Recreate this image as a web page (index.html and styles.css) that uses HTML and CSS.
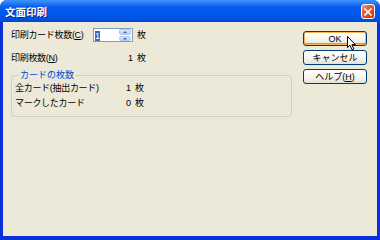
FILE: index.html
```html
<!DOCTYPE html>
<html lang="ja">
<head>
  <meta charset="UTF-8">
  <link rel="stylesheet" href="styles.css">
  <title>文面印刷</title>
</head>
<body>

<div class="window">
  <div class="titlebar">
    <span class="title">文面印刷</span>
    <span class="close-btn">
      <svg width="8" height="8" viewBox="0 0 8 8"><path d="M1 1 L7 7 M7 1 L1 7" stroke="#fff" stroke-width="1.6" stroke-linecap="square"/></svg>
    </span>
  </div>

  <div class="client">
    <div class="form">
      <div class="row">
        <span class="label">印刷カード枚数(<u>C</u>)</span>
        <div class="spin">
          <span class="spin-text"><span class="sel">1</span></span>
          <span class="spin-btns">
            <span class="arrow up"></span>
            <span class="arrow down"></span>
          </span>
        </div>
        <span class="unit">枚</span>
      </div>
      <div class="row row-gap">
        <span class="label">印刷枚数(<u>N</u>)</span>
        <span class="num">1</span>
        <span class="unit">枚</span>
      </div>

      <fieldset class="group">
        <legend>カードの枚数</legend>
        <div class="row">
          <span class="label small">全カード(抽出カード)</span>
          <span class="num">1</span>
          <span class="unit">枚</span>
        </div>
        <div class="row">
          <span class="label small">マークしたカード</span>
          <span class="num">0</span>
          <span class="unit">枚</span>
        </div>
      </fieldset>
    </div>

    <div class="buttons">
      <span class="btn default">OK</span>
      <span class="btn">キャンセル</span>
      <span class="btn">ヘルプ(<u>H</u>)</span>
    </div>
  </div>

  <!-- mouse pointer over the OK button -->
  <svg class="cursor" width="10" height="15" viewBox="0 0 10 15">
    <path d="M0.5 0.5 L0.5 11.5 L3 9.2 L5 13.8 L6.8 13 L4.9 8.6 L8.4 8.6 Z" fill="#fff" stroke="#000" stroke-width="1" stroke-linejoin="miter"/>
  </svg>
</div>

</body>
</html>
```

FILE: styles.css
```css
body {
  margin: 0;
  font-family: 'Liberation Sans', 'Noto Sans CJK JP', sans-serif;
  font-size: 9px;
  color: #000;
  background: #fff;
}

.window {
  position: relative;
  width: 380px;
  height: 240px;
  box-sizing: border-box;
  display: flex;
  flex-direction: column;
  background: #0831d9;
  border-radius: 7px 7px 0 0;
  overflow: hidden;
}

.titlebar {
  height: 22px;
  flex: none;
  display: flex;
  align-items: center;
  justify-content: space-between;
  padding: 0 5px 0 5px;
  background: linear-gradient(#3d95ff 0%, #2a80f5 12%, #0a5fe8 30%, #0058ee 55%, #0055e6 80%, #0047d0 100%);
}

.title {
  color: #fff;
  font-weight: bold;
  font-size: 10.5px;
  line-height: 12px;
  text-shadow: 1px 1px 0 #0a1f8c;
  margin-top: 1px;
}

.close-btn {
  width: 14px;
  height: 15px;
  box-sizing: border-box;
  border: 1px solid #fff;
  border-radius: 3px;
  background: linear-gradient(135deg, #f09a80 0%, #e3633f 35%, #d9431f 70%, #c3331a 100%);
  display: flex;
  align-items: center;
  justify-content: center;
  margin-top: 1px;
}

.client {
  flex: 1;
  margin: 0 3px 4px 3px;
  background: #ece9d8;
  display: flex;
  justify-content: space-between;
  padding: 6px 10px 0 8px;
}

.form {
  width: 281px;
}

.row {
  display: flex;
  align-items: center;
  height: 14px;
  line-height: 12px;
}

.row-gap {
  margin-top: 9px;
}

.label {
  width: 82px;
  white-space: nowrap;
  letter-spacing: -0.3px;
}

.label.small {
  width: 76px;
}

.num {
  width: 40px;
  text-align: right;
}

.unit {
  margin-left: 4px;
}

.spin {
  width: 40px;
  height: 14px;
  box-sizing: border-box;
  border: 1px solid #7f9db9;
  background: #fff;
  display: flex;
  justify-content: space-between;
}

.spin-text {
  padding: 1px 0 0 1px;
}

.sel {
  display: inline-block;
  background: #316ac5;
  color: #fff;
  width: 5px;
  height: 10px;
  line-height: 10px;
  text-align: center;
}

.spin-btns {
  width: 12px;
  display: flex;
  flex-direction: column;
  gap: 1px;
  padding: 0 1px 0 0;
}

.arrow {
  flex: 1;
  border-radius: 2px;
  background: linear-gradient(#dfe9ff, #b9cdf7);
  border: 1px solid #b4c8f6;
  position: relative;
}

.arrow::after {
  content: '';
  position: absolute;
  left: 3px;
  width: 0;
  height: 0;
  border-left: 2px solid transparent;
  border-right: 2px solid transparent;
}

.arrow.up::after {
  top: 1px;
  border-bottom: 2px solid #4d6185;
}

.arrow.down::after {
  top: 1px;
  border-top: 2px solid #4d6185;
}

.group {
  margin: 4px 0 0 0;
  padding: 0 3px 6px 3px;
  border: 1px solid #d0d0bf;
  border-radius: 3px;
}

.group legend {
  color: #0046d5;
  padding: 0 2px;
  margin-left: 3px;
  line-height: 12px;
}

.group .row + .row {
  margin-top: 1px;
}

.buttons {
  display: flex;
  flex-direction: column;
  gap: 4px;
  padding-top: 3px;
}

.btn {
  width: 64px;
  height: 15px;
  box-sizing: border-box;
  border: 1px solid #003c74;
  border-radius: 3px;
  background: linear-gradient(#ffffff 0%, #f5f4ef 60%, #e3e0d3 100%);
  display: flex;
  align-items: center;
  justify-content: center;
  line-height: 12px;
  white-space: nowrap;
}

.btn.default {
  box-shadow: inset 0 0 0 1px #f8b550, inset 0 -1px 0 1px #e5972a;
}

.cursor {
  position: absolute;
  left: 347px;
  top: 36px;
}
```
